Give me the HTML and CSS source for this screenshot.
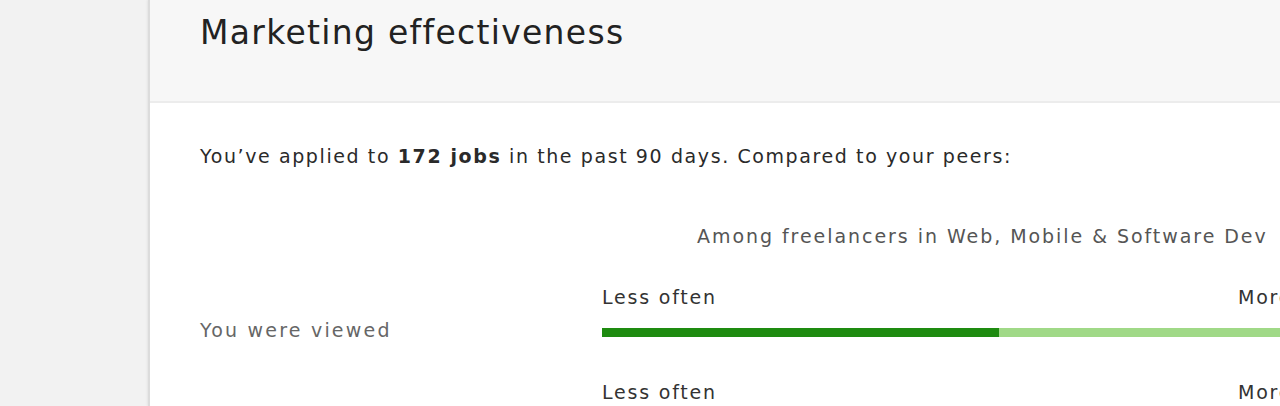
FILE: index.html
```html
<!DOCTYPE html>
<html>
<head>
<meta charset="utf-8">
<link rel="stylesheet" href="styles.css">
</head>
<body>
<div class="page">
  <aside class="side"></aside>
  <main class="card">
    <header class="card-head">
      <h1 class="title">Marketing effectiveness</h1>
    </header>
    <section class="card-body">
      <p class="intro">You’ve applied to <b>172 jobs</b> in the past 90 days. Compared to your peers:</p>
      <div class="among">Among freelancers in Web, Mobile &amp; Software Dev</div>
      <div class="metric">
        <div class="metric-label">You were viewed</div>
        <div class="metric-scale">
          <div class="scale-labels"><span>Less often</span><span class="more">More often</span></div>
          <div class="bar"><div class="bar-fill" style="width: 52.2%"></div></div>
        </div>
      </div>
      <div class="metric">
        <div class="metric-label"></div>
        <div class="metric-scale">
          <div class="scale-labels"><span>Less often</span><span class="more">More often</span></div>
          <div class="bar"><div class="bar-fill" style="width: 30%"></div></div>
        </div>
      </div>
    </section>
  </main>
</div>
</body>
</html>
```
FILE: styles.css
```css
html, body {
  margin: 0;
  padding: 0;
  overflow: hidden;
  height: 406px;
  background: #f2f2f2;
}
body {
  font-family: "DejaVu Sans", "Liberation Sans", sans-serif;
  color: #222;
}
.page {
  display: flex;
  width: 1280px;
  height: 406px;
  overflow: hidden;
}
.side {
  flex: 0 0 148px;
  background: #f2f2f2;
}
.card {
  flex: 0 0 1400px;
  background: #fff;
  border-left: 2px solid #dcdcdc;
  box-shadow: -1px 0 2px rgba(0,0,0,0.06);
}
.card-head {
  height: 103px;
  background: #f7f7f7;
  border-bottom: 2px solid #ececec;
  padding-left: 50px;
  box-sizing: border-box;
}
.title {
  margin: 0;
  padding-top: 13px;
  font-size: 33px;
  line-height: 40px;
  font-weight: 400;
  letter-spacing: 1.3px;
  color: #222;
}
.card-body {
  padding: 41px 0 0 50px;
}
.intro {
  margin: 0;
  font-size: 19px;
  line-height: 24px;
  letter-spacing: 1.6px;
  color: #2a2a2a;
}
.intro b {
  font-weight: 700;
}
.among {
  margin: 56px 0 0 497px;
  width: 700px;
  font-size: 19px;
  line-height: 24px;
  letter-spacing: 1.95px;
  color: #555;
  white-space: nowrap;
}
.metric {
  display: flex;
  align-items: flex-start;
  margin-top: 37px;
}
.metric + .metric {
  margin-top: 38px;
}
.metric-label {
  flex: 0 0 402px;
  font-size: 19px;
  line-height: 24px;
  letter-spacing: 2.2px;
  color: #666;
  padding-top: 33px;
}
.metric-label:empty {
  padding-top: 0;
}
.metric-scale {
  flex: 0 0 760px;
  min-width: 0;
}
.scale-labels {
  display: grid;
  grid-template-columns: 636px auto;
  font-size: 19px;
  line-height: 24px;
  letter-spacing: 1.8px;
  color: #333;
  white-space: nowrap;
}
.bar {
  margin-top: 19px;
  height: 9px;
  background: #a0d987;
}
.bar-fill {
  height: 100%;
  background: #1e8b10;
}
```
